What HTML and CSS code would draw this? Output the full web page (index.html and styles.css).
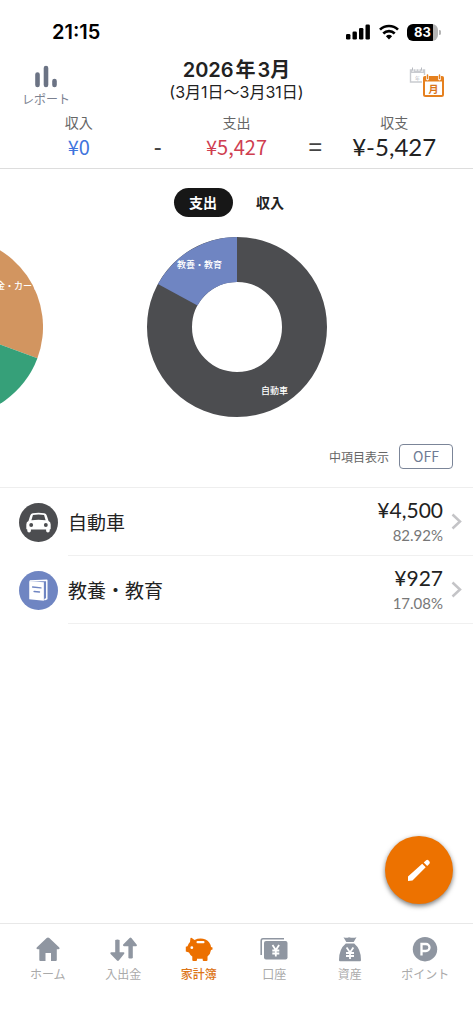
FILE: index.html
```html
<!DOCTYPE html>
<html lang="ja">
<head>
<meta charset="utf-8">
<meta name="viewport" content="width=device-width, initial-scale=1">
<title>家計簿</title>
<link rel="stylesheet" href="styles.css">
</head>
<body>
<div class="app">
  <div class="status">
    <time class="clock">21:15</time>
    <div class="indicators">
      <svg width="25" height="16" viewBox="0 0 25 16" aria-hidden="true">
        <rect x="0" y="10" width="4.400" height="5.500" rx="1.300"/><rect x="6.500" y="7.500" width="4.400" height="8" rx="1.300"/><rect x="13" y="4" width="4.400" height="11.500" rx="1.300"/><rect x="19.500" y="0.500" width="4.400" height="15" rx="1.300"/>
      </svg>
      <svg width="20" height="16" viewBox="0 0 20 16" fill="none" stroke="#000" stroke-width="2.700" aria-hidden="true">
        <path d="M10 15.500 6.900 12.200a4.600 4.600 0 0 1 6.200 0Z" fill="#000" stroke="none"/>
        <path d="M1 5.600a13 13 0 0 1 18 0"/>
        <path d="M4.300 9.400a8.300 8.300 0 0 1 11.400 0"/>
      </svg>
      <span class="power"><span class="battery">83</span><svg width="3" height="5" viewBox="0 0 3 5" fill="#b5b5b5" aria-hidden="true"><path d="M1 0a2.500 2.500 0 0 1 0 5Z"/></svg></span>
    </div>
  </div>

  <header class="header">
    <button class="report" type="button">
      <svg width="24" height="24" viewBox="0 0 24 24" fill="none" stroke="#6b7384" stroke-width="4.600" stroke-linecap="round" aria-hidden="true"><path d="M3.500 9.500V20M12 3V20M20.500 16V20"/></svg>
      <span>レポート</span>
    </button>
    <div class="period">
      <h1>2026<span class="unit">年</span>3月</h1>
      <p>(3月1日〜3月31日)</p>
    </div>
    <button class="switch" type="button" aria-label="年月切替">
      <svg width="36" height="31" viewBox="0 0 36 31" aria-hidden="true">
        <g fill="none" stroke="#c9cbd0"><path d="M1.500 3h14v12h-14z" stroke-width="1.400"/><path d="M1 4.500h15" stroke-width="3"/></g>
        <path d="M4 1v4M7 1v3M10 1v3M13 1v4" stroke="#fff" stroke-width="1"/><path d="M3.500 .5v3M12.500 .5v3" stroke="#b8bbc2"/>
        <text x="8.500" y="12.500" font-size="5" text-anchor="middle" fill="#b4b7be">年</text>
        <rect x="13" y="8" width="23" height="23" rx="2" fill="#fff"/>
        <rect x="15" y="10" width="19" height="19" rx="1.500" fill="#fff" stroke="#e5801f" stroke-width="2"/>
        <path d="M14.500 9.500h20v5H14.500z" fill="#e5801f"/>
        <path d="M18.500 9v3M30.500 9v3" stroke="#fff" stroke-width="2.800" stroke-linecap="round"/><path d="M18.500 8v3.500M30.500 8v3.500" stroke="#e5801f" stroke-width="1.500" stroke-linecap="round"/>
        <text x="24.500" y="26" font-size="10" font-weight="700" text-anchor="middle" fill="#d9741a">月</text>
      </svg>
    </button>
  </header>

  <dl class="summary">
    <div class="total"><dt>収入</dt><dd class="income">¥0</dd></div>
    <div class="operator">-</div>
    <div class="total"><dt>支出</dt><dd class="expense">¥5,427</dd></div>
    <div class="operator">=</div>
    <div class="total"><dt>収支</dt><dd class="balance">¥-5,427</dd></div>
  </dl>

  <main class="main">
    <div class="tabs" role="tablist">
      <button class="tab tab-active" type="button" role="tab" aria-selected="true">支出</button>
      <button class="tab" type="button" role="tab" aria-selected="false">収入</button>
    </div>

    <div class="carousel">
      <svg class="chart" viewBox="0 0 180 180" aria-label="前のグラフ">
        <path d="M90 0A90 90 0 0 1 174.400 121.300L90 90Z" fill="#d29560"/>
        <path d="M174.400 121.300A90 90 0 0 1 90 180V90Z" fill="#36a079"/>
        <text x="133" y="52">金・カード</text>
      </svg>
      <svg class="chart" viewBox="0 0 180 180" aria-label="支出の内訳">
        <circle cx="90" cy="90" r="67.500" fill="none" stroke="#4c4d50" stroke-width="45"/>
        <path d="M90 0A90 90 0 0 0 10.900 47.100L50.500 68.500A45 45 0 0 1 90 45Z" fill="#6f85c2"/>
        <text x="30" y="31">教養・教育</text>
        <text x="114" y="157">自動車</text>
      </svg>
      <div class="chart"></div>
    </div>

    <div class="option">
      <span id="sub-label">中項目表示</span>
      <button class="toggle" type="button" aria-labelledby="sub-label" aria-pressed="false">OFF</button>
    </div>

    <ul class="categories">
      <li><a class="category" href="#car">
        <svg class="badge" viewBox="0 0 40 40" aria-hidden="true">
          <circle cx="20" cy="20" r="20" fill="#4c4d50"/>
          <path d="M14 10.500Q20 9.500 26 10.500Q28 11 28.600 13L30.300 18.500Q32.500 19.500 32.500 22V26.500Q32.500 27.300 31.500 27.300V28.500A1.800 1.800 0 0 1 27.800 28.500V27.300H12.200V28.500A1.800 1.800 0 0 1 8.500 28.500V27.300Q7.500 27.300 7.500 26.500V22Q7.500 19.500 9.700 18.500L11.400 13Q12 11 14 10.500Z" fill="#fff"/>
          <path d="M14.300 12.200Q20 11.500 25.700 12.200L27.300 17.700Q20 16.700 12.700 17.700Z" fill="#4c4d50"/>
          <circle cx="12.500" cy="22.500" r="2" fill="#4c4d50"/><circle cx="27.500" cy="22.500" r="2" fill="#4c4d50"/>
        </svg>
        <span class="category-body">
          <span class="name">自動車</span>
          <span class="figures"><span class="amount">¥4,500</span><span class="percent">82.92%</span></span>
          <svg class="chevron" viewBox="0 0 11 17" aria-hidden="true"><path d="M1.500 1.500l7.500 7-7.500 7"/></svg>
        </span>
      </a></li>
      <li><a class="category" href="#education">
        <svg class="badge" viewBox="0 0 40 40" aria-hidden="true">
          <circle cx="20" cy="20" r="20" fill="#6f85c2"/>
          <path d="M10.500 10.500L25.500 11.500V30.500L10.500 29Z" fill="#fff"/>
          <path d="M11 10.200L28.500 9.500V28.500L26 29.500" fill="none" stroke="#fff" stroke-width="1.500" stroke-linejoin="round"/>
          <path d="M14 16.500l8.500.8M15.500 21l5.500.5" stroke="#6f85c2" stroke-width="1.500" stroke-linecap="round"/>
        </svg>
        <span class="category-body">
          <span class="name">教養・教育</span>
          <span class="figures"><span class="amount">¥927</span><span class="percent">17.08%</span></span>
          <svg class="chevron" viewBox="0 0 11 17" aria-hidden="true"><path d="M1.500 1.500l7.500 7-7.500 7"/></svg>
        </span>
      </a></li>
    </ul>
  </main>

  <div class="dock">
    <button class="compose" type="button" aria-label="入力する">
      <svg width="24" height="24" viewBox="0 0 24 24" fill="#fff" aria-hidden="true"><path d="M1 23V18.500L15.200 5.800L18.700 9.300L5.500 22.500ZM16.700 4.500L19.200 2.200Q20.300 1.300 21.400 2.300L22.500 3.500Q23.300 4.700 22.400 5.700L20.200 8Z"/></svg>
    </button>
    <nav class="nav">
      <a href="#home"><svg viewBox="0 0 28 28" aria-hidden="true"><path d="M14 2.500Q14.700 2.500 15.300 3L25.300 12.500Q26.300 14 24.500 14.200H22.800V25Q22.800 26 21.800 26H17V18H11.500V26H6.300Q5.300 26 5.300 25V14.200H3.600Q1.800 14 2.700 12.500L12.700 3Q13.300 2.500 14 2.500Z"/></svg>ホーム</a>
      <a href="#flow"><svg viewBox="0 0 28 28" aria-hidden="true"><path d="M6.200 5Q8.400 4 10.600 5V17.300H14.500Q16 17.700 15 19L9.800 25.500Q8.900 26.300 8 25.500L1.600 19Q.8 17.700 2.300 17.300H6.200ZM19.400 23Q21.600 24 23.800 23V11.200H27.200Q28.500 10.700 27.600 9.500L22.400 2.900Q21.500 2 20.600 2.900L14.200 9.500Q13.500 10.700 15 11.200H19.400Z"/></svg>入出金</a>
      <a class="current" href="#book" aria-current="page"><svg viewBox="0 0 28 28" aria-hidden="true"><path d="M5.500 3Q6.500 2.500 7.500 3.500L9.500 5Q15 2.500 20.500 4.500Q25.200 6.700 26 12L27.500 12.500V14.500L26 15Q25.500 19 22.500 21.500V25Q22.500 26 21.500 26H18.700Q17.700 26 17.700 25V23.800H12V25Q12 26 11 26H8.300Q7.300 26 7.300 25V21.500Q5 20 4 17.500L.8 16.500V11.800L2.500 11.300Q3.500 8.500 5 7Z"/><rect x="11.500" y="6" width="8" height="2.200" rx="1" fill="#fff"/><circle cx="6.800" cy="12.700" r="1.400" fill="#fff"/></svg>家計簿</a>
      <a href="#account"><svg viewBox="0 0 28 28" aria-hidden="true"><path d="M1.200 20V6Q1.200 3.800 3 3.800H24" fill="none" stroke="#8f96a1" stroke-width="1.600"/><rect x="4" y="6" width="23.500" height="18.500" rx="2"/><path d="M12.500 10l3.300 5 3.300-5M15.800 15v6.500M12.300 15.500h7M12.300 18.500h7" fill="none" stroke="#fff" stroke-width="1.800"/></svg>口座</a>
      <a href="#assets"><svg viewBox="0 0 28 28" aria-hidden="true"><path d="M7.500 2.300Q10.500 3.300 13 2.300Q17 3.300 20.500 2.300L17.700 7H10.300ZM9.800 8.500H18.200Q25 14 25 25Q25 26.300 24 26.300H4Q3 26.300 3 25Q3 14 9.800 8.500Z"/><path d="M10.600 12.500l3.400 5 3.400-5M14 17v7M10 18h8M10 21h8" fill="none" stroke="#fff" stroke-width="1.800"/></svg>資産</a>
      <a href="#points"><svg viewBox="0 0 28 28" aria-hidden="true"><circle cx="14" cy="14.200" r="12.200"/><path d="M10.500 20.500V9H15a3.500 3.500 0 0 1 0 7H10.500" fill="none" stroke="#fff" stroke-width="2.300"/></svg>ポイント</a>
    </nav>
  </div>
</div>
</body>
</html>
```
FILE: styles.css
```css
* { box-sizing: border-box; }
body, h1, p, dl, dd, ul { margin: 0; padding: 0; }
body {
  background: #fff;
  color: #222;
  font-family: "Noto Sans CJK JP", sans-serif;
}
button { border: 0; padding: 0; background: none; color: inherit; font: inherit; }
a { color: inherit; text-decoration: none; }
svg { display: block; }

.app { display: flex; flex-direction: column; min-height: 100vh; }

.status {
  display: flex;
  justify-content: space-between;
  align-items: center;
  padding: 20px 32px 0 52px;
}
.clock { color: #000; font: 600 20px/24px Inter, sans-serif; }
.indicators { display: flex; align-items: center; gap: 8px; }
.power { display: flex; align-items: center; }
.battery {
  width: 31px;
  border-radius: 6px;
  background: linear-gradient(90deg, #000 83%, #b5b5b5 83%);
  color: #fff;
  font: 700 13px/17px Inter, sans-serif;
  text-align: center;
}

.header {
  display: grid;
  grid-template-columns: 92px 1fr 92px;
  align-items: start;
  padding-top: 12px;
}
.report {
  display: flex;
  flex-direction: column;
  align-items: center;
  padding-top: 9px;
  color: #7b8190;
  font-size: 12px;
  line-height: 20px;
}
.period { text-align: center; }
.period h1 { font: 600 20px/29px Inter, "Noto Sans CJK JP", sans-serif; }
.period .unit { margin: 0 2px; }
.period p { font: 16px/14px Inter, "Noto Sans CJK JP", sans-serif; }
.switch { justify-self: center; padding-top: 11px; }

.summary {
  display: grid;
  grid-template-columns: 1fr 0 1fr 0 1fr;
  padding: 3px 0 6px;
  border-bottom: 1px solid #ddd;
}
.total { text-align: center; }
.total dt { color: #666; font-size: 14px; line-height: 20px; }
.total dd { font-size: 20px; line-height: 30px; }
.income { color: #3f74dd; }
.expense { color: #cf3e50; }
.total .balance { font-family: Lato, sans-serif; font-size: 24px; }
.operator {
  display: flex;
  justify-content: center;
  align-items: end;
  color: #444;
  font: 24px/30px "Liberation Sans", sans-serif;
}

.main { flex: 1; }
.tabs { display: flex; justify-content: center; gap: 8px; padding-top: 19px; }
.tab { width: 59px; border-radius: 15px; font-size: 14px; font-weight: 700; line-height: 29px; }
.tab-active { background: #171717; color: #fff; }

.carousel { display: flex; justify-content: center; gap: 104px; padding-top: 20px; overflow: hidden; }
.chart { flex: none; width: 180px; height: 180px; fill: #fff; font-size: 9px; font-weight: 500; }

.option {
  display: flex;
  justify-content: flex-end;
  align-items: center;
  gap: 10px;
  padding: 27px 20px 18px;
  color: #666;
  font-size: 12px;
}
.toggle {
  width: 54px;
  border: 1px solid #7b8598;
  border-radius: 4px;
  color: #6f7b94;
  font: 14px/23px "Noto Sans CJK JP", sans-serif;
}

.categories { border-top: 1px solid #eee; list-style: none; }
.category { display: flex; align-items: center; gap: 10px; padding-left: 19px; }
.badge { flex: none; width: 39px; height: 39px; }
.category-body {
  display: flex;
  flex: 1;
  align-items: center;
  gap: 8px;
  min-height: 68px;
  padding-right: 11px;
  border-bottom: 1px solid #f0f0f0;
}
.name { flex: 1; font-size: 19px; }
.figures { display: flex; flex-direction: column; align-items: flex-end; font-family: Lato, sans-serif; }
.amount { font-size: 21px; line-height: 26px; }
.percent { color: #777; font-size: 15px; line-height: 24px; }
.chevron { width: 11px; height: 17px; fill: none; stroke: #c4c4c7; stroke-width: 2.5px; }

.dock { position: sticky; bottom: 0; background: #fff; }
.compose {
  position: absolute;
  right: 20px;
  bottom: 120px;
  display: grid;
  place-items: center;
  width: 68px;
  height: 68px;
  border-radius: 50%;
  background: #ed7200;
  box-shadow: 0 2px 5px #0008;
}
.nav {
  display: grid;
  grid-template-columns: repeat(6, 1fr);
  padding: 11px 10px 40px;
  border-top: 1px solid #e8e8e8;
}
.nav a {
  display: flex;
  flex-direction: column;
  align-items: center;
  color: #aaa;
  font-size: 12px;
  line-height: 21px;
}
.nav svg { width: 28px; height: 28px; fill: #8f96a1; }
.nav .current { color: #dc7518; font-weight: 500; }
.nav .current svg { fill: #ec7000; }
```
